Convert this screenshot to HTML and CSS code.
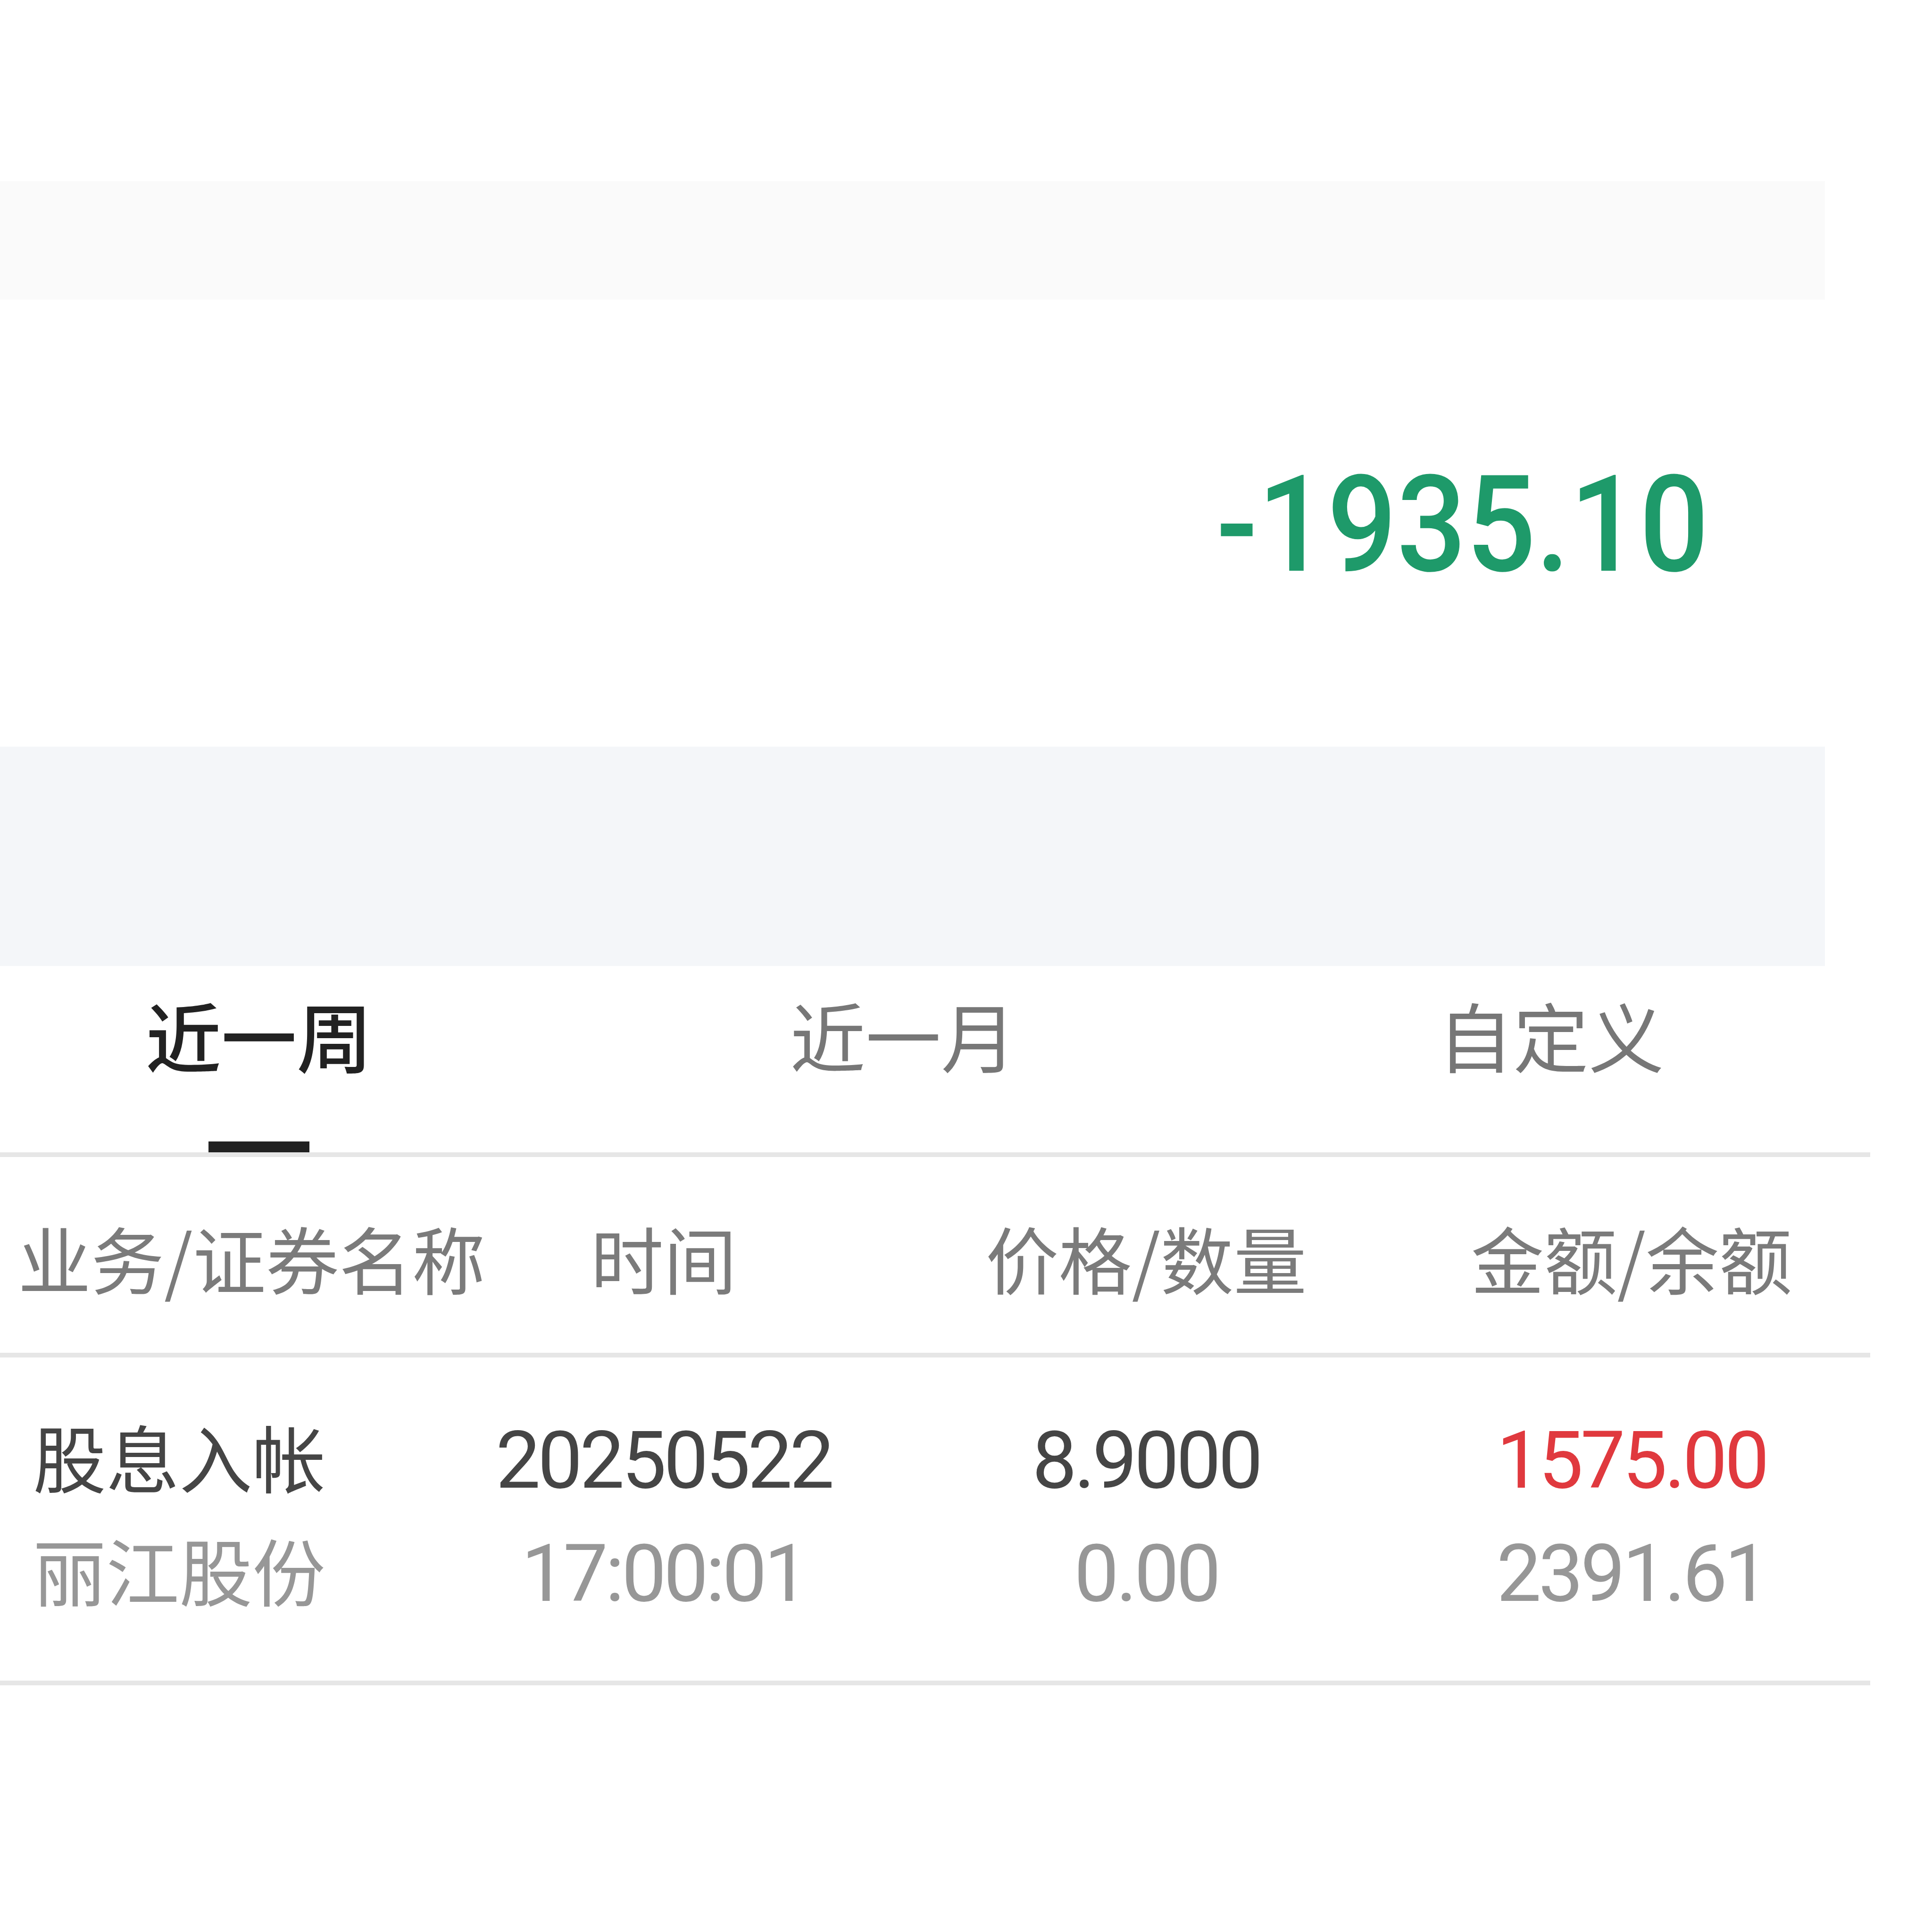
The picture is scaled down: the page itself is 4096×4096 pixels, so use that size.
FILE: index.html
```html
<!DOCTYPE html>
<html lang="zh-CN">
<head>
<meta charset="utf-8">
<title>资金流水</title>
<link rel="stylesheet" href="styles.css">
</head>
<body>
<div class="page">
  <div class="band band-top"></div>
  <div class="summary">
    <span class="total">-1935.10</span>
  </div>
  <div class="band band-mid"></div>
  <div class="tabs">
    <div class="tab tab-active"><span class="tab-label">近一周</span><span class="tab-bar"></span></div>
    <div class="tab"><span class="tab-label">近一月</span></div>
    <div class="tab"><span class="tab-label">自定义</span></div>
  </div>
  <div class="thead">
    <div class="th th-first">业务/证券名称</div>
    <div class="th">时间</div>
    <div class="th">价格/数量</div>
    <div class="th">金额/余额</div>
  </div>
  <div class="trow">
    <div class="cell cell-name">
      <div class="line line-main">股息入帐</div>
      <div class="line line-sub">丽江股份</div>
    </div>
    <div class="cell cell-num">
      <div class="line line-main">20250522</div>
      <div class="line line-sub">17:00:01</div>
    </div>
    <div class="cell cell-num">
      <div class="line line-main">8.9000</div>
      <div class="line line-sub">0.00</div>
    </div>
    <div class="cell cell-num">
      <div class="line line-up">1575.00</div>
      <div class="line line-sub">2391.61</div>
    </div>
  </div>
</div>
</body>
</html>
```

FILE: styles.css
```css
html, body {
  margin: 0;
  padding: 0;
  background: #ffffff;
}

body {
  width: 4096px;
  font-family: "Noto Sans CJK SC", "Noto Sans", sans-serif;
}

.page {
  width: 3965px;
  padding-top: 384px;
}

.band {
  width: 3869px;
}

.band-top {
  height: 251px;
  background: #fafafa;
}

.summary {
  width: 3869px;
  height: 948px;
  box-sizing: border-box;
  padding-top: 304px;
  padding-right: 246px;
  display: flex;
  justify-content: flex-end;
  align-items: flex-start;
}

.total {
  display: block;
  font-family: Roboto, "Noto Sans", sans-serif;
  font-weight: 500;
  font-size: 285px;
  line-height: 348px;
  color: #1e9a6a;
  transform: scaleX(0.91);
  transform-origin: right center;
  white-space: nowrap;
}

.band-mid {
  height: 465px;
  background: #f4f6f9;
}

.tabs {
  display: grid;
  grid-template-columns: 1098px 1634px 1112px;
  height: 395px;
  border-bottom: 10px solid #e6e6e6;
}

.tab {
  display: flex;
  flex-direction: column;
  align-items: center;
  padding-top: 64px;
  font-size: 160px;
  line-height: 160px;
  color: #777777;
  white-space: nowrap;
}

.tab-active {
  color: #222222;
  font-weight: 500;
}

.tab-bar {
  margin-top: auto;
  width: 214px;
  height: 23px;
  background: #222222;
}

.thead {
  display: grid;
  grid-template-columns: 907px 1000px 1046px 1012px;
  height: 281px;
  padding-top: 134px;
  border-bottom: 10px solid #e6e6e6;
  font-size: 155px;
  line-height: 155px;
  color: #7b7b7b;
}

.th {
  text-align: center;
  white-space: nowrap;
}

.th-first {
  text-align: left;
  padding-left: 38px;
}

.trow {
  display: grid;
  grid-template-columns: 907px 1000px 1046px 1012px;
  height: 685px;
  border-bottom: 10px solid #e6e6e6;
}

.cell {
  text-align: center;
  white-space: nowrap;
}

.cell-name {
  text-align: left;
  padding-left: 70px;
  padding-top: 88px;
  font-size: 155px;
}

.cell-num {
  padding-top: 98px;
  font-family: Roboto, "Noto Sans", sans-serif;
  font-size: 169px;
  letter-spacing: -6px;
}

.line {
  height: 240px;
  line-height: 240px;
}

.line-main {
  color: #454545;
}

.line-sub {
  color: #979797;
}

.line-up {
  color: #e0393e;
}
```
